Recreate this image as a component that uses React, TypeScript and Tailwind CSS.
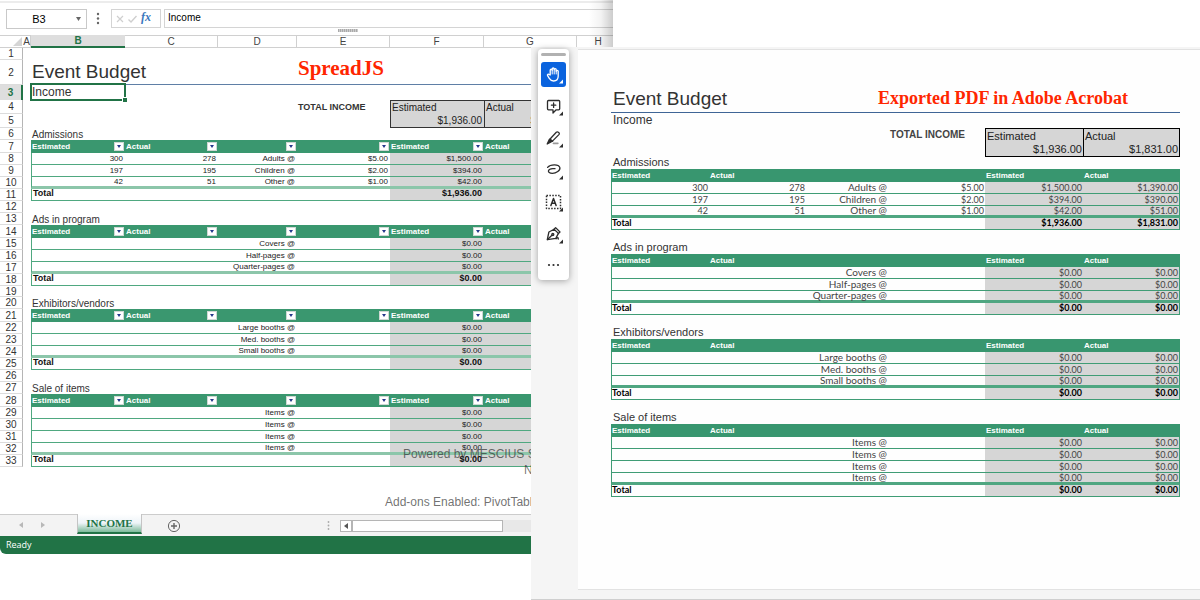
import { ReactNode } from "react";

type Row = {
  est?: string;
  act?: string;
  label: string;
  price?: string;
  estTotal: string;
  actTotal: string;
};

type Section = {
  title: string;
  rows: Row[];
  estTotal: string;
  actTotal: string;
};

const emptyRow = (label: string): Row => ({
  label,
  estTotal: "$0.00",
  actTotal: "$0.00",
});

const sections: Section[] = [
  {
    title: "Admissions",
    rows: [
      { est: "300", act: "278", label: "Adults @", price: "$5.00", estTotal: "$1,500.00", actTotal: "$1,390.00" },
      { est: "197", act: "195", label: "Children @", price: "$2.00", estTotal: "$394.00", actTotal: "$390.00" },
      { est: "42", act: "51", label: "Other @", price: "$1.00", estTotal: "$42.00", actTotal: "$51.00" },
    ],
    estTotal: "$1,936.00",
    actTotal: "$1,831.00",
  },
  {
    title: "Ads in program",
    rows: [emptyRow("Covers @"), emptyRow("Half-pages @"), emptyRow("Quarter-pages @")],
    estTotal: "$0.00",
    actTotal: "$0.00",
  },
  {
    title: "Exhibitors/vendors",
    rows: [emptyRow("Large booths @"), emptyRow("Med. booths @"), emptyRow("Small booths @")],
    estTotal: "$0.00",
    actTotal: "$0.00",
  },
  {
    title: "Sale of items",
    rows: [emptyRow("Items @"), emptyRow("Items @"), emptyRow("Items @"), emptyRow("Items @")],
    estTotal: "$0.00",
    actTotal: "$0.00",
  },
];

const columns = ["A", "B", "C", "D", "E", "F", "G", "H"];
const headerLabels = ["Estimated", "Actual", "", "", "Estimated", "Actual"];

/* ---------- spreadsheet ---------- */

const FormulaBar = () => {
  return (
    <div className="border-t-2 border-[#ececec] mt-px">
      <div className="flex items-start h-[25px] pt-[6px] pl-[6px] text-[10px] text-black">
        <div className="flex items-center w-[81px] h-[20px] border border-[#c9c9c9] bg-white">
          <input
            aria-label="Name box"
            defaultValue="B3"
            className="w-[64px] text-center text-[11px] outline-none"
          />
          <button aria-label="Show names" className="ml-[5px]">
            <svg width="5" height="4" viewBox="0 0 5 4">
              <path d="M0 0h5L2.5 4z" fill="#666" />
            </svg>
          </button>
        </div>
        <svg className="mx-[9px] mt-[3px]" width="4" height="13" viewBox="0 0 4 13" fill="#666">
          <circle cx="2" cy="2" r="1.2" />
          <circle cx="2" cy="6.5" r="1.2" />
          <circle cx="2" cy="11" r="1.2" />
        </svg>
        <div className="flex items-center gap-[4px] w-[50px] h-[19px] ml-[2px] pl-[4px] border border-[#d4d4d4]">
          <button aria-label="Cancel">
            <svg width="8" height="8" viewBox="0 0 8 8" fill="none" stroke="#cfcfcf" strokeWidth="1.2">
              <path d="M1 1l6 6M7 1l-6 6" />
            </svg>
          </button>
          <button aria-label="Enter">
            <svg width="9" height="8" viewBox="0 0 9 8" fill="none" stroke="#cfcfcf" strokeWidth="1.4">
              <path d="M0.5 4.5L3 7l5.5-6" />
            </svg>
          </button>
          <button
            aria-label="Insert function"
            className="pb-[3px] font-['Liberation_Serif',serif] italic font-bold text-[12px] leading-3 text-[#3b78bd]"
          >
            fx
          </button>
        </div>
        <input
          aria-label="Formula"
          defaultValue="Income"
          className="flex-1 min-w-0 h-[19px] ml-[3px] pl-[3px] pb-[3px] border border-r-0 border-[#d4d4d4] outline-none"
        />
      </div>
      <div className="flex justify-center h-[7px] pt-px pl-[83px]">
        <div className="w-5 h-[3px] bg-[repeating-linear-gradient(90deg,#aaa_0_1px,#ccc_1px_2px)]" />
      </div>
    </div>
  );
};

const RowHead = ({ n, active }: { n: number; active?: boolean }) => {
  return (
    <th
      scope="row"
      className={
        active
          ? "text-center text-[10px] bg-[#dedede] text-[#217346] font-bold border-r-2 border-r-[#217346]"
          : "text-center text-[10px] font-normal text-[#333] border-r border-r-[#b5b5b5] border-b border-b-[#dcdcdc]"
      }
    >
      {n}
    </th>
  );
};

const FilterButton = () => {
  return (
    <button
      aria-label="Filter"
      className="flex items-center justify-center w-[10px] h-[9px] bg-white border border-[#cfd8d4]"
    >
      <svg width="4" height="3" viewBox="0 0 4 3">
        <path d="M0 0h4L2 3z" fill="#24388a" />
      </svg>
    </button>
  );
};

const SheetSection = ({ section, start }: { section: Section; start: number }) => {
  const last = section.rows.length - 1;
  const totalRow = start + section.rows.length + 2;
  return (
    <>
      <tr className="h-3">
        <RowHead n={start} />
        <td />
        <td colSpan={6} className="pl-px text-[10px] text-[#333]">
          {section.title}
        </td>
        <td />
      </tr>
      <tr className="h-[13px]">
        <RowHead n={start + 1} />
        <td />
        {headerLabels.map((text, i) => (
          <td key={i} className="bg-[#3a976f] px-px">
            <div className="flex items-center justify-between text-[8px] leading-[9px] font-bold text-white">
              <span>{text}</span>
              <FilterButton />
            </div>
          </td>
        ))}
        <td />
      </tr>
      {section.rows.map((row, i) => {
        const line = i === last ? "border-b-[3px] border-b-[#8cc6aa]" : "border-b border-b-[#4fa880]";
        return (
          <tr key={i} className="h-3 text-right text-[8px] text-[#222]">
            <RowHead n={start + 2 + i} />
            <td />
            <td className={`border-l border-l-[#4fa880] pr-[2px] ${line}`}>{row.est}</td>
            <td className={`pr-[2px] ${line}`}>{row.act}</td>
            <td className={`pr-[2px] ${line}`}>{row.label}</td>
            <td className={`pr-[2px] ${line}`}>{row.price}</td>
            <td className={`pr-[2px] bg-[#d6d6d6] ${line}`}>{row.estTotal}</td>
            <td className={`pr-[2px] bg-[#d6d6d6] ${line}`}>{row.actTotal}</td>
            <td />
          </tr>
        );
      })}
      <tr className="h-3 text-right text-[9px] font-bold text-[#111]">
        <RowHead n={totalRow} />
        <td />
        <td colSpan={4} className="align-top text-left pl-px border-l border-b border-[#4fa880]">
          Total
        </td>
        <td className="align-top pr-[2px] bg-[#d6d6d6] border-b border-[#4fa880]">{section.estTotal}</td>
        <td className="align-top pr-[2px] bg-[#d6d6d6] border-b border-[#4fa880]">{section.actTotal}</td>
        <td />
      </tr>
      {totalRow < 33 && (
        <tr className={totalRow === 18 ? "h-[11px]" : "h-3"}>
          <RowHead n={totalRow + 1} />
          <td colSpan={8} />
        </tr>
      )}
    </>
  );
};

const Sheet = () => {
  return (
    <table className="w-[620px] table-fixed border-separate border-spacing-0 text-[10px] leading-[9px]">
      <colgroup>
        <col className="w-[23px]" />
        <col className="w-[8px]" />
        <col className="w-[94px]" />
        <col className="w-[93px]" />
        <col className="w-[79px]" />
        <col className="w-[93px]" />
        <col className="w-[94px]" />
        <col className="w-[93px]" />
        <col className="w-[43px]" />
      </colgroup>
      <thead>
        <tr className="h-[13px] text-[#444]">
          <th className="border-t border-b border-[#d0d0d0]">
            <svg className="ml-auto mr-px" width="9" height="9" viewBox="0 0 9 9">
              <path d="M9 0v9H0z" fill="#d5d5d5" />
            </svg>
          </th>
          {columns.map((name) => (
            <th
              key={name}
              scope="col"
              className={
                name === "B"
                  ? "bg-[#dedede] text-[#217346] font-bold border-b-2 border-[#217346]"
                  : "font-normal border-t border-b border-r border-[#d0d0d0]"
              }
            >
              {name}
            </th>
          ))}
        </tr>
      </thead>
      <tbody>
        <tr className="h-3">
          <RowHead n={1} />
          <td colSpan={8} />
        </tr>
        <tr className="h-[25px]">
          <RowHead n={2} />
          <td />
          <td colSpan={3} className="pl-px text-[19px] leading-5 text-[#333] border-b border-[#5f7fa6]">
            Event Budget
          </td>
          <td
            colSpan={3}
            className="pl-px pb-[8px] font-['Liberation_Serif',serif] font-bold text-[21px] leading-4 text-[#ff2600] border-b border-[#5f7fa6]"
          >
            SpreadJS
          </td>
          <td />
        </tr>
        <tr className="h-[15px]">
          <RowHead n={3} active />
          <td />
          <td className="relative pl-px pb-[2px] text-[12px] leading-3 text-[#333]">
            Income
            <div className="absolute -top-[2px] -left-px -right-px -bottom-px border-2 border-[#217346]">
              <div className="absolute -right-[3px] -bottom-[3px] w-[5px] h-[5px] bg-[#217346] border-t border-l border-white" />
            </div>
          </td>
          <td colSpan={6} />
        </tr>
        <tr className="h-[14px]">
          <RowHead n={4} />
          <td colSpan={4} />
          <td className="pl-px text-[9px] font-bold text-[#333]">TOTAL INCOME</td>
          <td className="pl-px bg-[#d6d6d6] border-t border-l border-[#333] text-[#222]">Estimated</td>
          <td className="pl-px bg-[#d6d6d6] border-t border-l border-[#333] text-[#222]">Actual</td>
          <td />
        </tr>
        <tr className="h-[14px] text-right text-[#222]">
          <RowHead n={5} />
          <td colSpan={5} />
          <td className="pr-[2px] bg-[#d6d6d6] border-b border-l border-[#333]">$1,936.00</td>
          <td className="pr-[2px] bg-[#d6d6d6] border-b border-l border-[#333]">$1,831.00</td>
          <td />
        </tr>
        {sections.map((section, i) => (
          <SheetSection key={section.title} section={section} start={6 + i * 7} />
        ))}
      </tbody>
    </table>
  );
};

const TabStrip = () => {
  return (
    <div className="flex h-[22px] bg-[#f3f3f3] border-t border-[#cccccc]">
      <div className="flex items-center gap-[18px] w-[77px] pb-[2px] pl-[19px]">
        <button aria-label="Previous sheet">
          <svg width="4" height="6" viewBox="0 0 4 6">
            <path d="M4 0v6L0 3z" fill="#b8b8b8" />
          </svg>
        </button>
        <button aria-label="Next sheet">
          <svg width="4" height="6" viewBox="0 0 4 6">
            <path d="M0 0v6l4-3z" fill="#b8b8b8" />
          </svg>
        </button>
      </div>
      <button className="-mt-px w-[65px] h-5 border-x border-x-[#c4c4c4] border-b-2 border-b-[#217346] bg-linear-to-b from-white via-[#eef4f8] to-[#7dbb9c] font-['Liberation_Serif',serif] font-bold text-[11px] leading-4 text-[#217346]">
        INCOME
      </button>
      <button aria-label="New sheet" className="ml-[25px]">
        <svg width="14" height="14" viewBox="0 0 14 14" fill="none" stroke="#666">
          <circle cx="7" cy="7" r="5.6" strokeWidth="1" />
          <path d="M7 4v6M4 7h6" strokeWidth="1.4" />
        </svg>
      </button>
      <div className="flex flex-1 items-center pl-[146px]">
        <svg width="3" height="9" viewBox="0 0 3 9" fill="#aaa">
          <circle cx="1.5" cy="1" r="0.9" />
          <circle cx="1.5" cy="4.5" r="0.9" />
          <circle cx="1.5" cy="8" r="0.9" />
        </svg>
        <div className="flex flex-1 h-3 ml-[10px] bg-[#e8e8e8]">
          <button
            aria-label="Scroll left"
            className="flex items-center justify-center w-3 border border-[#b5b5b5] bg-white"
          >
            <svg width="4" height="6" viewBox="0 0 4 6">
              <path d="M4 0v6L0 3z" fill="#555" />
            </svg>
          </button>
          <div className="w-[151px] border border-[#b5b5b5] bg-white" />
        </div>
      </div>
    </div>
  );
};

const SpreadsheetWindow = () => {
  return (
    <section className="relative w-[613px] bg-white overflow-hidden">
      <FormulaBar />
      <div className="relative pb-[47px]">
        <Sheet />
        <div className="absolute bottom-0 left-[385px] whitespace-nowrap text-[12px] leading-4 text-[#333]/70">
          <p className="pl-[18px]">Powered by MESCIUS SpreadJS</p>
          <p className="pl-[139px]">N</p>
          <p className="pt-4 pb-1">Add-ons Enabled: PivotTable</p>
        </div>
      </div>
      <TabStrip />
      <footer className="h-[18px] pl-[6px] rounded-bl-md bg-[#217346] font-['Open_Sans',sans-serif] text-[9px] leading-[18px] text-white">
        Ready
      </footer>
      <div className="absolute top-0 right-0 w-6 h-[47px] bg-linear-to-r from-transparent via-black/5 to-black/20" />
    </section>
  );
};

/* ---------- pdf viewer ---------- */

const ToolButton = ({
  label,
  active,
  children,
}: {
  label: string;
  active?: boolean;
  children: ReactNode;
}) => {
  return (
    <button
      aria-label={label}
      className={active ? "block rounded-[3px] bg-[#0a63de] text-white" : "block text-[#2c2c2c]"}
    >
      <svg
        width="25"
        height="25"
        viewBox="0 0 25 25"
        fill="none"
        stroke="currentColor"
        strokeWidth="1.3"
        strokeLinecap="round"
        strokeLinejoin="round"
      >
        {children}
      </svg>
    </button>
  );
};

const Corner = () => <path d="M22 17.5v4h-4z" fill="currentColor" stroke="none" />;

const Toolbar = () => {
  return (
    <div className="flex flex-col items-center gap-[7px] w-[31px] ml-[7px] mt-[2px] pt-1 pb-px rounded-[4px] bg-white shadow-[0_1px_7px_rgba(0,0,0,0.35)]">
      <div className="w-[25px] h-[3px] -mb-px rounded-full bg-[#b1b1b1]" />
      <ToolButton label="Hand" active>
        <path d="M9.2 13V8.2a1 1 0 0 1 2 0V7a1 1 0 0 1 2 0v.7a1 1 0 0 1 2 0v1.6a1 1 0 0 1 2 0v4.7c0 3.2-1.6 5-4.6 5-2.2 0-3.2-.8-4.3-2.6L6.6 13.6c-.6-1 .8-1.9 1.6-1z" />
        <path d="M11.2 8v4M13.2 7.5V12M15.2 8.5V12" strokeWidth="1" />
        <Corner />
      </ToolButton>
      <ToolButton label="Add comment">
        <path d="M7.5 6.5h10.2a1 1 0 0 1 1 1v7.3a1 1 0 0 1-1 1h-2.5L12 19v-3.2H7.5a1 1 0 0 1-1-1V7.5a1 1 0 0 1 1-1z" />
        <path d="M12.6 9v4.4M10.4 11.2h4.4" />
        <Corner />
      </ToolButton>
      <ToolButton label="Highlight">
        <path d="M9.3 12.7l6-6.4c.6-.6 1.6-.5 2.4.1s.8 1.5.2 2.2l-6.2 6.3-2.9.7z" />
        <path d="M8.3 13.5L6.2 18l4.3-2.4z" fill="currentColor" />
        <path d="M9 13l2.6 2.3" />
        <path d="M12.5 17.3h4.3" strokeWidth="1.8" stroke="#999" />
        <Corner />
      </ToolButton>
      <ToolButton label="Draw">
        <path d="M6.6 9.4C9.4 6.2 17.6 5.9 18.8 9.4c1 3.2-3.9 5.9-7.4 5.9-2.9 0-4.3-1.2-3.9-2.7.5-1.7 4-2.2 6.5-1.9" />
        <Corner />
      </ToolButton>
      <ToolButton label="Add text">
        <rect x="5.5" y="5.5" width="14" height="13" strokeWidth="1.5" strokeDasharray="1.5 1.4" strokeLinecap="butt" />
        <path d="M9.9 15.5l2.6-7 2.6 7M10.8 13.3h3.4" strokeWidth="1.5" />
        <Corner />
      </ToolButton>
      <ToolButton label="Sign">
        <path d="M6.3 17.7l1.6-7.7 5.2-2.8 4.3 4.2-2.6 5z" />
        <path d="M13 7.2l1.6-1.6 4.4 4.4-1.6 1.5M6.5 17.5l4.4-4.3" />
        <circle cx="11.8" cy="12.5" r="1" />
        <path d="M15 16.8c1.2-1.8 2.6-1.6 2.2.2" />
        <Corner />
      </ToolButton>
      <ToolButton label="More tools">
        <g fill="currentColor" stroke="none">
          <circle cx="8" cy="11" r="1.1" />
          <circle cx="12.5" cy="11" r="1.1" />
          <circle cx="17" cy="11" r="1.1" />
        </g>
      </ToolButton>
    </div>
  );
};

const PdfColumns = () => {
  return (
    <colgroup>
      <col className="w-[98px]" />
      <col className="w-[97px]" />
      <col className="w-[82px]" />
      <col className="w-[97px]" />
      <col className="w-[98px]" />
      <col className="w-[97px]" />
    </colgroup>
  );
};

const PdfSection = ({ section }: { section: Section }) => {
  const last = section.rows.length - 1;
  return (
    <table className="w-full mb-3 table-fixed border-separate border-spacing-0 leading-[9px]">
      <caption className="h-3 pl-[2px] text-left text-[11px] leading-[10px] text-[#333]">{section.title}</caption>
      <PdfColumns />
      <thead>
        <tr className="h-[13px] bg-[#38966f] text-left text-[8px] text-white">
          {headerLabels.map((text, i) => (
            <th key={i} className="pl-px font-bold">
              {text}
            </th>
          ))}
        </tr>
      </thead>
      <tbody className="font-['Lato',sans-serif] text-right">
        {section.rows.map((row, i) => {
          const line = i === last ? "border-b-[3px] border-b-[#4fa681]" : "border-b border-b-[#3f9c75]";
          return (
            <tr key={i} className="h-3 text-[9px] text-[#444]">
              <td className={`pr-px border-l border-l-[#3f9c75] ${line}`}>{row.est}</td>
              <td className={`pr-px ${line}`}>{row.act}</td>
              <td className={`pr-px text-[10px] ${line}`}>{row.label}</td>
              <td className={`pr-px ${line}`}>{row.price}</td>
              <td className={`pr-px bg-[#d6d6d6] ${line}`}>{row.estTotal}</td>
              <td className={`pr-px bg-[#d6d6d6] border-r border-r-[#3f9c75] ${line}`}>{row.actTotal}</td>
            </tr>
          );
        })}
        <tr className="h-3 text-[9px] font-bold text-black">
          <td colSpan={4} className="align-top text-left border-l border-b border-[#3f9c75]">
            Total
          </td>
          <td className="align-top pr-px bg-[#d6d6d6] border-b border-[#3f9c75]">{section.estTotal}</td>
          <td className="align-top pr-px bg-[#d6d6d6] border-b border-r border-[#3f9c75]">
            {section.actTotal}
          </td>
        </tr>
      </tbody>
    </table>
  );
};

const PdfPage = () => {
  return (
    <div className="flex-1 pt-9 pl-[33px] pr-5 bg-[#fefefe] border-y border-[#e2e2e2]">
      <header className="flex items-center justify-between h-[27px] pl-[2px] pr-[52px] border-b border-[#3f6596]">
        <h1 className="text-[19px] leading-6 text-[#333]">Event Budget</h1>
        <h2 className="pb-[2px] font-['Liberation_Serif',serif] font-bold text-[18px] leading-6 text-[#ff2600]">
          Exported PDF in Adobe Acrobat
        </h2>
      </header>
      <table className="w-full table-fixed border-separate border-spacing-0 text-[11px] leading-3 text-[#222]">
        <PdfColumns />
        <tbody>
          <tr className="h-[15px]">
            <td colSpan={6} className="pl-[2px] pb-[2px] text-[12px] text-[#333]">
              Income
            </td>
          </tr>
          <tr className="h-[14px]">
            <td colSpan={3} />
            <td className="pl-[2px] text-[10px] font-bold text-[#444]">TOTAL INCOME</td>
            <td className="pl-px bg-[#d6d6d6] border-t border-l border-black">Estimated</td>
            <td className="pl-px bg-[#d6d6d6] border-t border-x border-black">Actual</td>
          </tr>
          <tr className="h-[15px] text-right">
            <td colSpan={4} />
            <td className="pr-px bg-[#d6d6d6] border-b border-l border-black">$1,936.00</td>
            <td className="pr-px bg-[#d6d6d6] border-b border-x border-black">$1,831.00</td>
          </tr>
        </tbody>
      </table>
      {sections.map((section) => (
        <PdfSection key={section.title} section={section} />
      ))}
    </div>
  );
};

const PdfWindow = () => {
  return (
    <section className="absolute top-[47px] bottom-0 left-[531px] right-0 flex bg-[#f5f5f5] border-b border-[#cfcfcf]">
      <aside className="w-[47px]">
        <Toolbar />
      </aside>
      <div className="flex flex-1 flex-col pt-[2px] pb-[9px]">
        <PdfPage />
      </div>
    </section>
  );
};

const App = () => {
  return (
    <main className="relative min-h-screen bg-white overflow-hidden font-['Liberation_Sans',Arial,sans-serif]">
      <SpreadsheetWindow />
      <PdfWindow />
    </main>
  );
};

export default App;
